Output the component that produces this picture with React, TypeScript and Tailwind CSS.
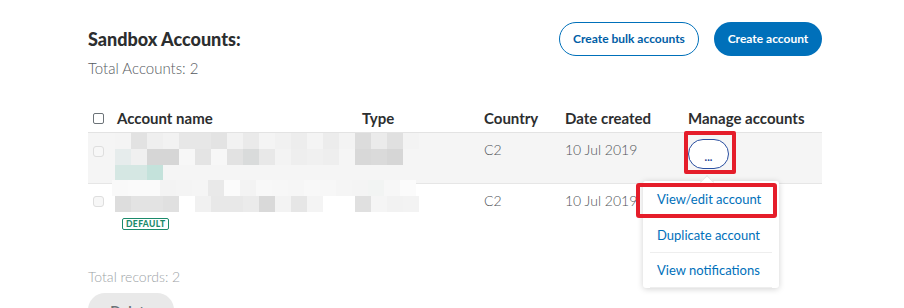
import React from "react";

const rowOneTop = [
  "bg-[#f4f4f4]", "bg-[#e2e2e2]", "bg-[#efefef]", "bg-[#f2f2f2]", "bg-[#e7e7e7]",
  "bg-[#e7e7e7]", "bg-[#e3e3e3]", "bg-[#f2f2f2]", "bg-[#eaeaea]", "bg-[#f4f4f4]",
  "bg-[#f1f1f1]", "bg-[#ededed]", "bg-[#f4f4f4]", "bg-[#ececec]", "bg-[#f3f3f3]",
  "bg-[#dcdcdc]", "bg-[#ebebeb]", "bg-[#e0e0e0]", "bg-[#f3f3f3]",
];
const rowOneMid = [
  "bg-[#e6ecec]", "bg-[#f0f0f0]", "bg-[#d6d6d6]", "bg-[#d6d6d6]", "bg-[#f7f7f7]",
  "bg-[#e4e4e4]", "bg-[#f7f7f7]", "bg-[#e2e2e2]", "bg-[#d9dbdb]", "bg-[#e8e8e8]",
  "bg-[#f3f3f3]", "bg-[#eeeeee]", "bg-[#f0f0f0]", "bg-[#eeeeee]", "bg-[#f5f5f5]",
  "bg-[#d8d8d8]", "bg-[#dadada]", "bg-[#d6d6d6]",
];
const rowOneLow = ["bg-[#d5e7e3]", "bg-[#d5e7e3]", "bg-[#c4e2db]"];

const rowTwoTop = [
  "bg-[#f9f9f9]", "bg-[#fafafa]", "bg-[#fafafa]", "bg-[#f3f3f3]", "bg-[#f4f4f4]",
  "bg-[#f5f5f5]", "bg-[#e9e9e9]", "bg-[#fbfbfb]", "bg-[#f3f3f3]", "bg-[#f8f8f8]",
  "bg-[#f7f7f7]", "bg-[#f6f6f6]", "bg-[#f8f8f8]", "bg-[#f7f7f7]", "bg-[#f5f5f5]",
  "bg-[#f4f4f4]", "bg-[#f2f4f3]", "bg-[#f7f7f7]", "bg-[#fbfbfb]",
];
const rowTwoMid = [
  "bg-[#dddddd]", "bg-[#e3e3e3]", "bg-[#e3e3e3]", "bg-[#e0e0e0]", "bg-[#ffffff]",
  "bg-[#f1f1f1]", "bg-[#e8e8e8]", "bg-[#e8e8e8]", "bg-[#ebebeb]", "bg-[#d9d9d9]",
  "bg-[#f3f3f3]", "bg-[#e6e6e6]", "bg-[#f4f4f4]", "bg-[#ffffff]", "bg-[#ffffff]",
  "bg-[#e0e0e0]", "bg-[#f5f5f5]", "bg-[#f2f2f2]", "bg-[#f3f3f3]",
];

const gridCols = "grid grid-cols-[29px_245px_122px_81px_123px_134px]";

// blurred account name, kept as a mosaic of blocks
const Mosaic = ({ rows }: { rows: string[][] }) => (
  <div className="flex flex-col">
    {rows.map((row, i) => (
      <div key={i} className="flex">
        {row.map((c, j) => (
          <div key={j} className={`w-4 h-4 ${c}`} />
        ))}
      </div>
    ))}
  </div>
);

const Check = ({ muted }: { muted?: boolean }) => (
  <div
    className={
      muted
        ? "ml-[5px] w-[11px] h-[11px] rounded-[3px] border border-[#dedede] bg-[#f7f7f7]"
        : "ml-[5px] w-[11px] h-[11px] rounded-[2px] border border-[#6c7378] bg-white"
    }
  />
);

const App = () => {
  return (
    <div className="w-[904px] h-[308px] overflow-hidden bg-white font-['Lato',sans-serif] text-[#2c2e2f]">
      <div className="pl-[88px] w-[822px] pt-[22px]">
        {/* Heading */}
        <div className="flex justify-between items-start">
          <div className="pt-[5px]">
            <h1 className="text-[18px] leading-6 font-black">Sandbox Accounts:</h1>
            <p className="mt-[7px] text-[15px] leading-5 font-light text-[#555a5e]">
              Total Accounts: 2
            </p>
          </div>
          <div className="flex gap-[15px]">
            <button className="h-[34px] w-[140px] rounded-full border border-[#0070ba] text-[#005ea6] text-[12px] font-bold">
              Create bulk accounts
            </button>
            <button className="h-[34px] w-[108px] rounded-full bg-[#0070ba] text-white text-[12px] font-bold">
              Create account
            </button>
          </div>
        </div>

        {/* Table header */}
        <div className={`${gridCols} mt-[30px] pb-[4px] border-b border-[#e3e3e3] items-center text-[15px] leading-5 font-bold`}>
          <Check />
          <div>Account name</div>
          <div>Type</div>
          <div>Country</div>
          <div>Date created</div>
          <div>Manage accounts</div>
        </div>

        {/* Row 1 */}
        <div className={`${gridCols} h-[51px] bg-[#f5f5f5] border-b border-[#e6e6e6] text-[14px] leading-5 font-light text-[#4f5458]`}>
          <div className="pt-[13px]">
            <Check muted />
          </div>
          <div className="-ml-[2px] col-span-2">
            <Mosaic rows={[rowOneTop, rowOneMid, rowOneLow]} />
          </div>
          <div className="pt-[7px]">C2</div>
          <div className="pt-[7px]">10 Jul 2019</div>
          <div className="pt-[6px]">
            <div className="relative w-[41px] h-[30px]">
              <button className="w-[41px] h-[30px] rounded-full border border-[#2a4fa0] bg-white text-[#1c3f94] text-[11px] font-bold leading-none pt-[4px]">
                ...
              </button>
              <div className="absolute -left-[4px] -top-[8px] w-[52px] h-[43px] border-4 border-[#e51d2a] rounded-[2px]" />

              {/* Dropdown */}
              <div className="absolute left-[14px] top-[38px] w-[10px] h-[10px] rotate-45 bg-white border-l border-t border-[#e6e6e6] z-20" />
              <div className="absolute -left-[45px] top-[42px] w-[136px] bg-white rounded-[3px] shadow-[0_1px_6px_rgba(0,0,0,0.18)] z-10 px-[7px] font-normal text-[13px] text-[#0070ba] whitespace-nowrap">
                <div className="h-[36px] flex items-center pl-[7px] border-b border-[#eeeeee]">View/edit account</div>
                <div className="h-[36px] flex items-center pl-[7px] border-b border-[#eeeeee]">Duplicate account</div>
                <div className="h-[35px] flex items-center pl-[7px] border-b border-[#eeeeee]">View notifications</div>
              </div>
              <div className="absolute -left-[52px] top-[44px] w-[141px] h-[35px] border-4 border-[#e51d2a] rounded-[3px] z-30" />
            </div>
          </div>
        </div>

        {/* Row 2 */}
        <div className={`${gridCols} pb-[7px] text-[14px] leading-5 font-light text-[#4f5458]`}>
          <div className="pt-[12px]">
            <Check muted />
          </div>
          <div className="-mt-[4px] -ml-[5px] col-span-2">
            <Mosaic rows={[rowTwoTop]} />
            <div className="ml-[3px]">
              <Mosaic rows={[rowTwoMid]} />
            </div>
            <span className="ml-[10px] mt-[5px] inline-flex items-center h-[12px] px-[3px] border border-[#1b8a6b] rounded-[2px] text-[8.5px] font-black tracking-[0.4px] leading-none text-[#1b8a6b]">
              DEFAULT
            </span>
          </div>
          <div className="pt-[7px]">C2</div>
          <div className="pt-[7px]">10 Jul 2019</div>
          <div />
        </div>

        <p className="mt-[28px] text-[14px] leading-5 font-light text-[#9da3a6]">Total records: 2</p>
        <button className="mt-[6px] w-[86px] h-[34px] rounded-full bg-[#e9e9e9] text-[14px] font-bold text-[#6c7378]">
          Delete
        </button>
      </div>
    </div>
  );
};

export default App;
